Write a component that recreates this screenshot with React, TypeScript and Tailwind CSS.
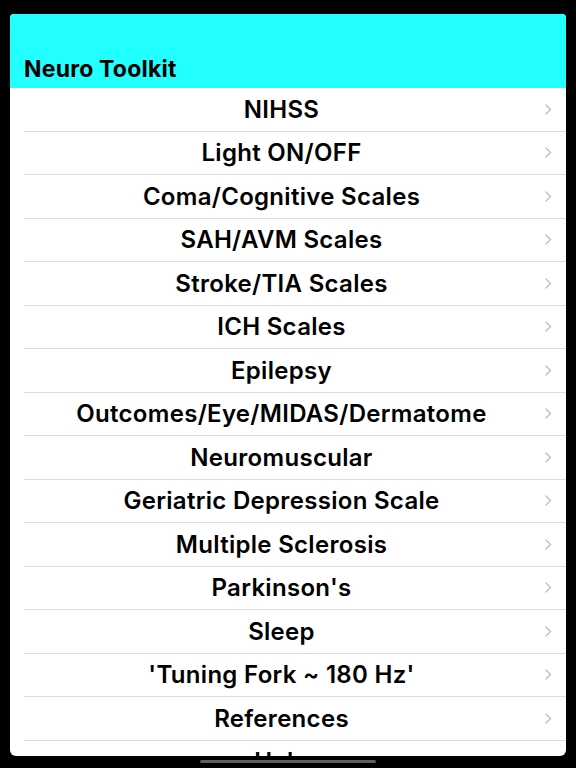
const items = [
  'NIHSS',
  'Light ON/OFF',
  'Coma/Cognitive Scales',
  'SAH/AVM Scales',
  'Stroke/TIA Scales',
  'ICH Scales',
  'Epilepsy',
  'Outcomes/Eye/MIDAS/Dermatome',
  'Neuromuscular',
  'Geriatric Depression Scale',
  'Multiple Sclerosis',
  "Parkinson's",
  'Sleep',
  "'Tuning Fork ~ 180 Hz'",
  'References',
  'Help',
];

function Chevron() {
  return (
    <svg width="7" height="11" viewBox="0 0 7 11" className="ml-[6px] shrink-0">
      <path d="M1 1l4.5 4.5L1 10" fill="none" stroke="#c4c4c7" strokeWidth="1.6" strokeLinecap="round" strokeLinejoin="round" />
    </svg>
  );
}

export default function App() {
  return (
    <div className="relative h-[768px] w-[576px] overflow-hidden bg-black font-['Inter','Liberation_Sans',sans-serif]">
      <div className="ml-[10px] mt-[14px] flex h-[742px] w-[556px] flex-col overflow-hidden rounded-t-[4px] rounded-b-[6px] bg-white">
        {/* nav bar */}
        <div className="flex h-[74px] shrink-0 items-end bg-[#22ffff] px-[14px] pb-[5px]">
          <h1 className="text-[23px] font-bold leading-[28px] tracking-[0.2px] text-black">Neuro Toolkit</h1>
        </div>

        {/* list — text clipped at the bottom like the reference */}
        <div className="flex flex-col">
          {items.map((label) => (
            <div key={label} className="flex h-[43.5px] shrink-0 flex-col">
              <div className="flex flex-1 items-center px-[14px]">
                <span className="flex-1 pt-px text-center text-[24px] font-semibold leading-[30px] tracking-[0.3px] text-black">{label}</span>
                <Chevron />
              </div>
              <div className="ml-[14px] h-px bg-[#dcdcdf]" />
            </div>
          ))}
        </div>
      </div>

      {/* home indicator */}
      <div className="absolute left-[200px] top-[760px] h-[3px] w-[176px] rounded-full bg-[#5e5e5e]" />
    </div>
  );
}
